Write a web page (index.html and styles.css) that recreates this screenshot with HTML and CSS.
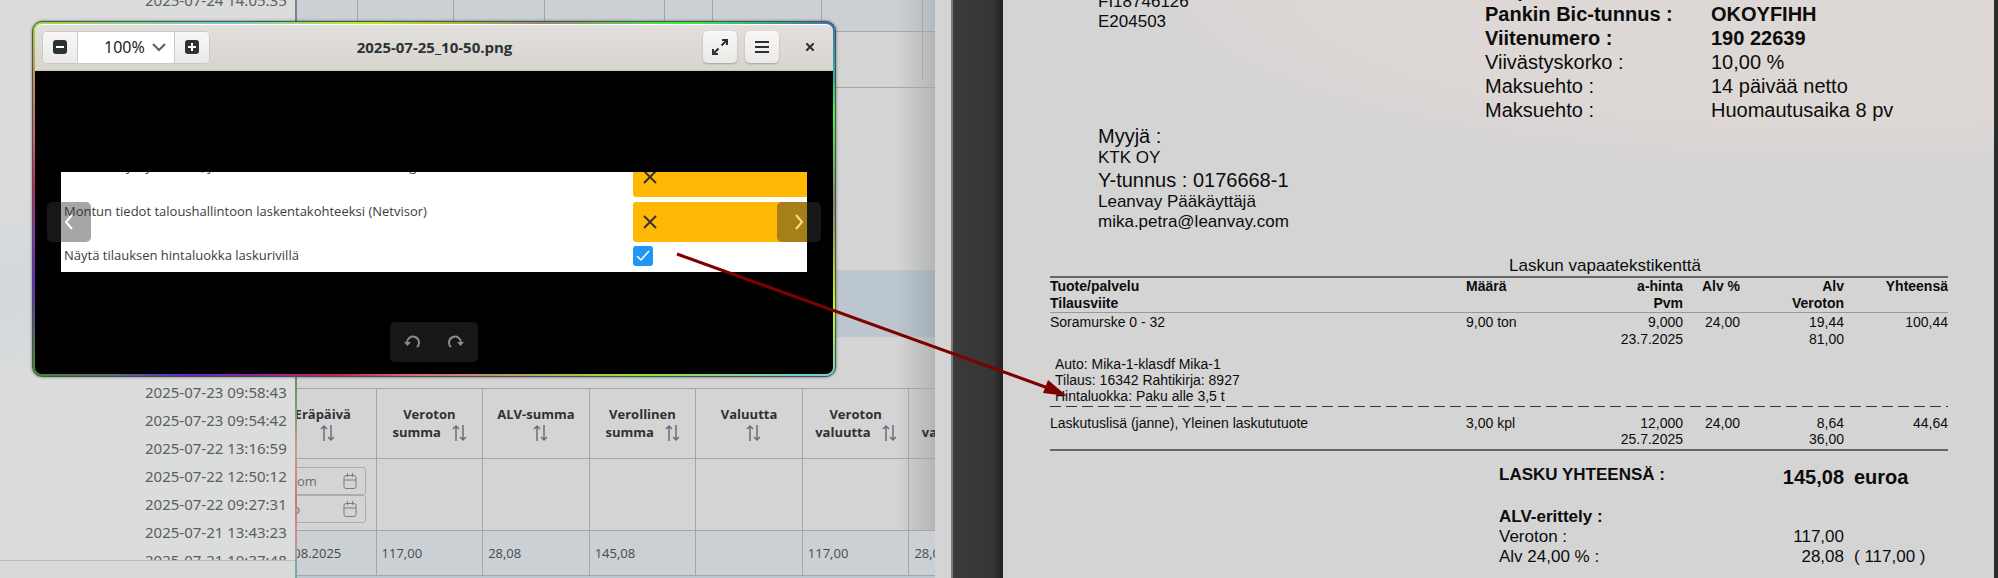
FILE: index.html
```html
<!DOCTYPE html>
<html lang="fi">
<head>
    <meta charset="UTF-8">
    <meta name="viewport" content="width=device-width, initial-scale=1.0">
    <title>Laskut</title>
    <link rel="stylesheet" href="styles.css">
</head>
<body>
    <div class="desktop">
        <!-- Tiedostoikkuna -->
        <aside class="files">
            <ul class="file-dates">
                <li>2025-07-24 14:05:35</li>
                <li>2025-07-23 09:58:43</li>
                <li>2025-07-23 09:54:42</li>
                <li>2025-07-22 13:16:59</li>
                <li>2025-07-22 12:50:12</li>
                <li>2025-07-22 09:27:31</li>
                <li>2025-07-21 13:43:23</li>
                <li>2025-07-21 10:37:48</li>
            </ul>
            <div class="files-footer"></div>
        </aside>

        <!-- Laskujen listaus -->
        <main class="app">
            <div class="app-row">
                <span></span><span></span><span></span><span></span><span></span><span></span><span></span>
            </div>
            <div class="app-summary"><span></span></div>
            <div class="app-space"></div>
            <div class="app-band"></div>
            <table class="invoices">
                <thead>
                    <tr>
                        <th>Eräpäivä<br><svg class="sort" viewBox="0 0 14 18"><path d="M4 17V2M1 5l3-3 3 3M11 1v15M8 13l3 3 3-3"/></svg></th>
                        <th>Veroton summa <svg class="sort" viewBox="0 0 14 18"><path d="M4 17V2M1 5l3-3 3 3M11 1v15M8 13l3 3 3-3"/></svg></th>
                        <th>ALV-summa<br><svg class="sort" viewBox="0 0 14 18"><path d="M4 17V2M1 5l3-3 3 3M11 1v15M8 13l3 3 3-3"/></svg></th>
                        <th>Verollinen summa <svg class="sort" viewBox="0 0 14 18"><path d="M4 17V2M1 5l3-3 3 3M11 1v15M8 13l3 3 3-3"/></svg></th>
                        <th>Valuutta<br><svg class="sort" viewBox="0 0 14 18"><path d="M4 17V2M1 5l3-3 3 3M11 1v15M8 13l3 3 3-3"/></svg></th>
                        <th>Veroton valuutta <svg class="sort" viewBox="0 0 14 18"><path d="M4 17V2M1 5l3-3 3 3M11 1v15M8 13l3 3 3-3"/></svg></th>
                        <th><br>valuutta <svg class="sort" viewBox="0 0 14 18"><path d="M4 17V2M1 5l3-3 3 3M11 1v15M8 13l3 3 3-3"/></svg></th>
                    </tr>
                </thead>
                <tbody>
                    <tr class="filters">
                        <td>
                            <label class="date">
                                <input type="text" placeholder="From" aria-label="From">
                                <svg viewBox="0 0 14 16"><path d="M3 2.500h8a2 2 0 0 1 2 2v9a2 2 0 0 1-2 2H3a2 2 0 0 1-2-2v-9a2 2 0 0 1 2-2zM1 7h12M4.500 0v4M9.500 0v4"/></svg>
                            </label>
                            <label class="date">
                                <input type="text" placeholder="To" aria-label="To">
                                <svg viewBox="0 0 14 16"><path d="M3 2.500h8a2 2 0 0 1 2 2v9a2 2 0 0 1-2 2H3a2 2 0 0 1-2-2v-9a2 2 0 0 1 2-2zM1 7h12M4.500 0v4M9.500 0v4"/></svg>
                            </label>
                        </td>
                        <td></td><td></td><td></td><td></td><td></td><td></td>
                    </tr>
                    <tr class="data">
                        <td>06.08.2025</td>
                        <td>117,00</td>
                        <td>28,08</td>
                        <td>145,08</td>
                        <td></td>
                        <td>117,00</td>
                        <td>28,08</td>
                    </tr>
                </tbody>
            </table>
            <div class="app-rest"></div>
        </main>
        <div class="app-edge"></div>

        <!-- Lasku -->
        <section class="viewer">
            <article class="page">
                <div class="page-top">
                    <div class="seller">
                        <p>FI18746126</p>
                        <p>E204503</p>
                        <p class="big seller-title">Myyjä :</p>
                        <p>KTK OY</p>
                        <p class="big">Y-tunnus : 0176668-1</p>
                        <p>Leanvay Pääkäyttäjä</p>
                        <p>mika.petra@leanvay.com</p>
                    </div>
                    <dl class="terms">
                        <dt class="bold">Eräpäivä :</dt><dd></dd>
                        <dt class="bold">Pankin Bic-tunnus :</dt><dd class="bold">OKOYFIHH</dd>
                        <dt class="bold">Viitenumero :</dt><dd class="bold">190 22639</dd>
                        <dt>Viivästyskorko :</dt><dd>10,00 %</dd>
                        <dt>Maksuehto :</dt><dd>14 päivää netto</dd>
                        <dt>Maksuehto :</dt><dd>Huomautusaika 8 pv</dd>
                    </dl>
                </div>
                <p class="free-text">Laskun vapaatekstikenttä</p>
                <table class="lines">
                    <colgroup>
                        <col class="c-name"><col class="c-qty"><col class="c-price"><col class="c-vat"><col class="c-net"><col class="c-sum">
                    </colgroup>
                    <thead>
                        <tr>
                            <th>Tuote/palvelu<br>Tilausviite</th>
                            <th>Määrä</th>
                            <th>a-hinta<br>Pvm</th>
                            <th>Alv %</th>
                            <th>Alv<br>Veroton</th>
                            <th>Yhteensä</th>
                        </tr>
                    </thead>
                    <tbody>
                        <tr>
                            <td>Soramurske 0 - 32</td>
                            <td>9,00 ton</td>
                            <td>9,000<br>23.7.2025</td>
                            <td>24,00</td>
                            <td>19,44<br>81,00</td>
                            <td>100,44</td>
                        </tr>
                        <tr class="details">
                            <td colspan="6">Auto: Mika-1-klasdf Mika-1<br>Tilaus: 16342 Rahtikirja: 8927<br>Hintaluokka: Paku alle 3,5 t</td>
                        </tr>
                        <tr class="last">
                            <td>Laskutuslisä (janne), Yleinen laskututuote</td>
                            <td>3,00 kpl</td>
                            <td>12,000<br>25.7.2025</td>
                            <td>24,00</td>
                            <td>8,64<br>36,00</td>
                            <td>44,64</td>
                        </tr>
                    </tbody>
                </table>
                <div class="totals">
                    <span class="bold">LASKU YHTEENSÄ :</span><span class="num bold big">145,08</span><span class="bold big">euroa</span>
                    <span class="bold vat-title">ALV-erittely :</span>
                    <span>Veroton :</span><span class="num">117,00</span><span></span>
                    <span>Alv 24,00 % :</span><span class="num">28,08</span><span>( 117,00 )</span>
                </div>
            </article>
        </section>
    </div>

    <!-- Kuvankatselu -->
    <div class="window">
        <header class="titlebar">
            <div class="zoom">
                <button aria-label="Loitonna"><svg width="14" height="14" viewBox="0 0 14 14"><rect width="14" height="14" rx="3" fill="#2b3234"/><path d="M3 7h8" stroke="#fff" stroke-width="2"/></svg></button>
                <input type="text" value="100%" aria-label="Zoomaus">
                <button class="zoom-menu" aria-label="Zoomausvalikko"><svg width="16" height="10" viewBox="0 0 16 10"><path d="M2 2l6 6 6-6" fill="none" stroke="#5b6265" stroke-width="2"/></svg></button>
                <button aria-label="Lähennä"><svg width="14" height="14" viewBox="0 0 14 14"><rect width="14" height="14" rx="3" fill="#2b3234"/><path d="M3 7h8M7 3v8" stroke="#fff" stroke-width="2"/></svg></button>
            </div>
            <h1>2025-07-25_10-50.png</h1>
            <div class="actions">
                <button class="raised" aria-label="Koko näyttö"><svg width="16" height="16" viewBox="0 0 16 16"><path d="M10 1h5v5M15 1l-5.500 5.500M6 15H1v-5M1 15l5.500-5.500" fill="none" stroke="#2b3234" stroke-width="2"/></svg></button>
                <button class="raised" aria-label="Valikko"><svg width="14" height="12" viewBox="0 0 14 12"><path d="M0 1h14M0 6h14M0 11h14" stroke="#2b3234" stroke-width="2"/></svg></button>
                <button class="close" aria-label="Sulje"><svg width="8" height="8" viewBox="0 0 8 8"><path d="M0 0l8 8M8 0L0 8" stroke="#2b3234" stroke-width="2"/></svg></button>
            </div>
        </header>
        <div class="canvas">
            <div class="picture">
                <div class="setting cut">
                    <span>Tilaustietoja työmaalta, jos toimitus on laskutettu ilman kg</span>
                    <div class="no"><svg width="14" height="14" viewBox="0 0 14 14"><path d="M1 1l12 12M13 1L1 13" stroke="#333" stroke-width="2"/></svg></div>
                </div>
                <div class="setting">
                    <span>Montun tiedot taloushallintoon laskentakohteeksi (Netvisor)</span>
                    <div class="no"><svg width="14" height="14" viewBox="0 0 14 14"><path d="M1 1l12 12M13 1L1 13" stroke="#333" stroke-width="2"/></svg></div>
                </div>
                <div class="setting short">
                    <label for="priceClass">Näytä tilauksen hintaluokka laskurivillä</label>
                    <span class="check"><input type="checkbox" id="priceClass" checked><svg width="14" height="12" viewBox="0 0 14 12"><path d="M1 6l4 4 8-9" fill="none" stroke="#fff" stroke-width="1.500"/></svg></span>
                </div>
            </div>
            <button class="osd prev" aria-label="Edellinen"><svg width="10" height="16" viewBox="0 0 10 16"><path d="M8 1L2 8l6 7" fill="none" stroke="#fff" stroke-width="2"/></svg></button>
            <button class="osd next" aria-label="Seuraava"><svg width="10" height="16" viewBox="0 0 10 16"><path d="M2 1l6 7-6 7" fill="none" stroke="#ffe08a" stroke-width="2"/></svg></button>
            <div class="rotate">
                <button aria-label="Kierrä vasemmalle"><svg width="16" height="14" viewBox="0 0 16 14"><path d="M3 8a6 6 0 1 1 10 4" fill="none" stroke="#8a8a8a" stroke-width="2"/><path d="M0 7h7l-3.500 4z" fill="#8a8a8a"/></svg></button>
                <button aria-label="Kierrä oikealle"><svg width="16" height="14" viewBox="0 0 16 14"><path d="M13 8a6 6 0 1 0-10 4" fill="none" stroke="#8a8a8a" stroke-width="2"/><path d="M16 7H9l3.500 4z" fill="#8a8a8a"/></svg></button>
            </div>
        </div>
    </div>

    <!-- Nuoli asetuksesta laskuriville -->
    <svg class="arrow" width="1100" height="420" viewBox="0 0 1100 420">
        <path d="M677 254L1048 388" stroke="#7f0000" stroke-width="3"/>
        <path d="M1067 396L1048 380L1043 393z" fill="#7f0000"/>
    </svg>
</body>
</html>
```

FILE: styles.css
```css
* {
    box-sizing: border-box;
}

body {
    margin: 0;
    position: relative;
    overflow: hidden;
    background-color: #d4d4d4;
    font-family: "Open Sans", "Noto Sans", sans-serif;
    font-size: 13px;
    color: #333;
}

p, dl, dd, ul, h1 {
    margin: 0;
    padding: 0;
}

button {
    display: flex;
    align-items: center;
    justify-content: center;
    padding: 0;
    border: none;
    background: none;
    cursor: pointer;
}

.bold {
    font-weight: bold;
}

.desktop {
    display: flex;
    height: 100vh;
    overflow: hidden;
}

/* Tiedostoikkuna */
.files {
    flex: 0 0 297px;
    display: flex;
    flex-direction: column;
    z-index: 1;
    border-right: 2px solid;
    border-image: linear-gradient(#78857f 0%, #78857f 65%, #6d9a4e 68%, #c9a27e 78%, #d8717c 86%, #d38a90 92%, #5fb5a3 100%) 1;
    background: radial-gradient(ellipse 120px 100px at 0 290px, #d3d8dc, transparent), #dbdcdc;
}

.file-dates {
    height: 560px;
    overflow: hidden;
    list-style: none;
    padding-left: 145px;
    font-family: "Noto Sans", sans-serif;
    font-size: 15px;
    line-height: 28px;
    color: #5c5e60;
    white-space: nowrap;
}

.file-dates li:first-child {
    margin-top: -14px;
    margin-bottom: 364px;
}

.files-footer {
    flex: 1;
    border-top: 1px solid #bdbbba;
    background-color: #d8d9d9;
}

/* Laskujen listaus */
.app {
    flex: 0 0 638px;
    display: flex;
    flex-direction: column;
    overflow: hidden;
    background: linear-gradient(90deg, #d4d4d4 600px, #b4b5b6);
}

.app-row {
    display: grid;
    grid-template-columns: 61px 96px 91px 120px 48px 109px 101px;
    height: 32px;
    border-bottom: 1px solid #a3a5a7;
    background: linear-gradient(90deg, #cad0d3 600px, #b4babe);
}

.app-row span {
    border-right: 1px solid #a3a5a7;
}

.app-summary {
    height: 56px;
    border-bottom: 1px solid #a3a5a7;
}

.app-summary span {
    display: block;
    width: 626px;
    height: 48px;
    border-right: 1px solid #a3a5a7;
}

.app-space {
    height: 182px;
}

.app-band {
    height: 67px;
    margin-bottom: 51px;
    background: linear-gradient(90deg, #bcc6cf 600px, #a4aeb6);
}

.app-rest {
    flex: 1;
    background-color: #bcc6cf;
}

.invoices {
    width: 747px;
    flex: none;
    margin-left: -28px;
    table-layout: fixed;
    border-collapse: collapse;
    line-height: 18px;
}

.invoices th, .invoices td {
    border: 1px solid #a3a5a7;
}

.invoices th {
    height: 70px;
    padding: 0 8px;
    color: #2f3133;
}

.invoices .filters td {
    height: 72px;
    padding: 0 10px 0 6px;
}

.invoices .data td {
    height: 45px;
    padding: 0 5px;
    background-color: #cad0d3;
    color: #484b4e;
}

.sort {
    width: 14px;
    height: 18px;
    margin-left: 8px;
    vertical-align: middle;
    fill: none;
    stroke: #66707a;
    stroke-width: 1.5;
}

.date {
    display: flex;
    align-items: center;
    height: 28px;
    padding: 0 8px;
    border: 1px solid #a8adb3;
    border-radius: 3px;
}

.date input {
    width: 60px;
    min-width: 0;
    padding: 0;
    border: none;
    background: none;
    font: inherit;
}

.date input::placeholder {
    color: #6c6f73;
    opacity: 1;
}

.date svg {
    width: 14px;
    height: 16px;
    flex: none;
    fill: none;
    stroke: #7a7d80;
}

.app-edge {
    flex: 0 0 18px;
    border-right: 2px solid #7a7a7a;
    background-color: #d4d4d4;
}

/* Lasku */
.viewer {
    flex: 1;
    padding: 0 4px 0 50px;
    background: linear-gradient(90deg, #3a3a3a, #363636 40px, #1f1f1f 50px, #2b2d2d);
}

.page {
    height: 100%;
    overflow: hidden;
    padding: 0 46px 0 47px;
    background: radial-gradient(ellipse 760px 190px at 85% -10px, #ddd7d5 70%, transparent), #d4d4d4;
    font-family: "Liberation Sans", Arial, sans-serif;
    font-size: 17px;
    color: #0c0c0c;
}

.big {
    font-size: 20px;
}

.page-top {
    display: flex;
    height: 256px;
}

.seller {
    flex: 0 0 435px;
    padding-left: 48px;
    line-height: 20px;
}

.seller p:first-child {
    margin-top: -8px;
}

.seller .big {
    line-height: 24px;
}

.seller .seller-title {
    margin-top: 92px;
}

.terms {
    display: grid;
    grid-template-columns: 226px 1fr;
    grid-auto-rows: 24px;
    margin-top: -22px;
    font-size: 20px;
    line-height: 24px;
}

.free-text {
    height: 20px;
    padding-left: 459px;
    line-height: 20px;
}

.lines {
    width: 100%;
    table-layout: fixed;
    border-collapse: collapse;
    font-size: 14px;
    line-height: 17px;
}

.c-qty { width: 137px; }
.c-price { width: 80px; }
.c-vat { width: 57px; }
.c-net { width: 104px; }
.c-sum { width: 104px; }

.lines th, .lines td {
    padding: 0;
    text-align: right;
    vertical-align: top;
}

.lines th {
    height: 35px;
    border-top: 2px solid #666;
    border-bottom: 1px solid #999;
}

.lines tbody td {
    padding-top: 1px;
}

.lines th:nth-child(-n+2), .lines td:nth-child(-n+2) {
    text-align: left;
}

.lines .details td {
    padding: 8px 0 3px 5px;
    background: repeating-linear-gradient(90deg, #333 0, #333 11px, transparent 11px, transparent 16px) bottom / 100% 1px no-repeat;
    line-height: 16px;
}

.lines .last td {
    height: 43px;
    padding-top: 8px;
    border-bottom: 2px solid #666;
    line-height: 16px;
}

.totals {
    display: grid;
    grid-template-columns: 245px 100px 1fr;
    padding: 14px 0 0 449px;
    line-height: 20px;
}

.totals .num {
    padding-right: 0;
    text-align: right;
}

.totals .num + span {
    padding-left: 10px;
}

.totals .big {
    line-height: 24px;
}

.totals .vat-title {
    grid-column: 1 / -1;
    margin-top: 18px;
}

/* Kuvankatselu */
.window {
    position: absolute;
    left: 32px;
    top: 21px;
    z-index: 2;
    width: 804px;
    height: 356px;
    padding: 2px;
    border: 1px solid #4b5052;
    border-radius: 10px;
    background:
        linear-gradient(90deg, #9ddc3d, #6fd0d0 24%, #b5f01c 42%, #9a8a6a 63%, #3ff03f 81%, #3a70c0) top / 100% 3px no-repeat,
        linear-gradient(90deg, #458a2b, #57707a 10%, #6524d0 19%, #c42560 38%, #d8707a 48%, #90e832 76%, #6fd0d0 95%) bottom / 100% 3px no-repeat,
        linear-gradient(#9ddc3d, #c09a50 14%, #c9606a 34%, #c42560 46%, #8a2fb0 60%, #6524d0 74%, #458a2b 96%) left / 8px 100% no-repeat,
        linear-gradient(#3a70c0, #2ab0a0 15%, #3aff3a 26%, #908070 52%, #c8ff00 80%, #6fd0d0) right / 8px 100% no-repeat;
    box-shadow: 0 0 3px rgba(0, 0, 0, 0.5);
}

.titlebar {
    display: grid;
    grid-template-columns: 1fr auto 1fr;
    align-items: center;
    height: 47px;
    padding: 0 6px 1px 7px;
    border-top: 1px solid #fff;
    border-bottom: 1px solid #c9c5c0;
    border-radius: 7px 7px 0 0;
    background: linear-gradient(#e3dfdc, #d8d4cf);
}

.titlebar h1 {
    font-size: 15px;
    color: #2b3234;
}

.zoom {
    display: flex;
    width: 168px;
    height: 33px;
    border: 1px solid #cdc8c3;
    border-radius: 5px;
    overflow: hidden;
    background-color: #fff;
}

.zoom button {
    width: 34px;
    background: linear-gradient(#f8f7f6, #ebe9e7);
}

.zoom input {
    width: 68px;
    padding: 0 0 0 26px;
    border: none;
    border-left: 1px solid #cdc8c3;
    font: 16px "Noto Sans", sans-serif;
    color: #1c1f20;
}

.zoom .zoom-menu {
    width: 30px;
    padding-right: 2px;
    border-right: 1px solid #cdc8c3;
    background: #fff;
}

.actions {
    display: flex;
    justify-content: flex-end;
    gap: 8px;
}

.raised, .close {
    width: 34px;
    height: 32px;
}

.raised {
    border-radius: 5px;
    background: linear-gradient(#f8f7f6, #ebe9e7);
    box-shadow: 0 1px 2px rgba(0, 0, 0, 0.25);
}

.close {
    margin-left: 6px;
}

.canvas {
    position: relative;
    height: 303px;
    padding: 101px 26px 0;
    border-radius: 0 0 7px 7px;
    background-color: #000;
}

.picture {
    display: flex;
    flex-direction: column;
    gap: 4px;
    height: 100px;
    overflow: hidden;
    background-color: #fff;
}

.setting {
    flex: none;
    display: grid;
    grid-template-columns: 569px 1fr;
    height: 40px;
    padding-left: 3px;
    line-height: 18px;
    color: #3c3c3c;
}

.setting.cut {
    margin-top: -15px;
    margin-bottom: 1px;
}

.no {
    display: flex;
    align-items: center;
    padding-left: 10px;
    border-radius: 3px 0 0 3px;
    background-color: #ffb905;
}

.setting.short {
    height: 20px;
}

.check {
    position: relative;
    display: flex;
    width: 20px;
    height: 20px;
}

.check input {
    appearance: none;
    width: 20px;
    height: 20px;
    margin: 0;
    border-radius: 3px;
    background-color: #2196f3;
}

.check svg {
    position: absolute;
    left: 3px;
    top: 4px;
    pointer-events: none;
}

.osd {
    position: absolute;
    top: 131px;
    width: 44px;
    height: 40px;
    border-radius: 5px;
    background-color: rgba(52, 52, 52, 0.44);
}

.prev {
    left: 12px;
}

.next {
    right: 12px;
}

.rotate {
    position: absolute;
    left: 355px;
    bottom: 12px;
    display: flex;
    width: 88px;
    height: 40px;
    border-radius: 5px;
    background-color: #171717;
}

.rotate button {
    flex: 1;
}

.arrow {
    position: absolute;
    left: 0;
    top: 0;
    z-index: 3;
    pointer-events: none;
}
```
